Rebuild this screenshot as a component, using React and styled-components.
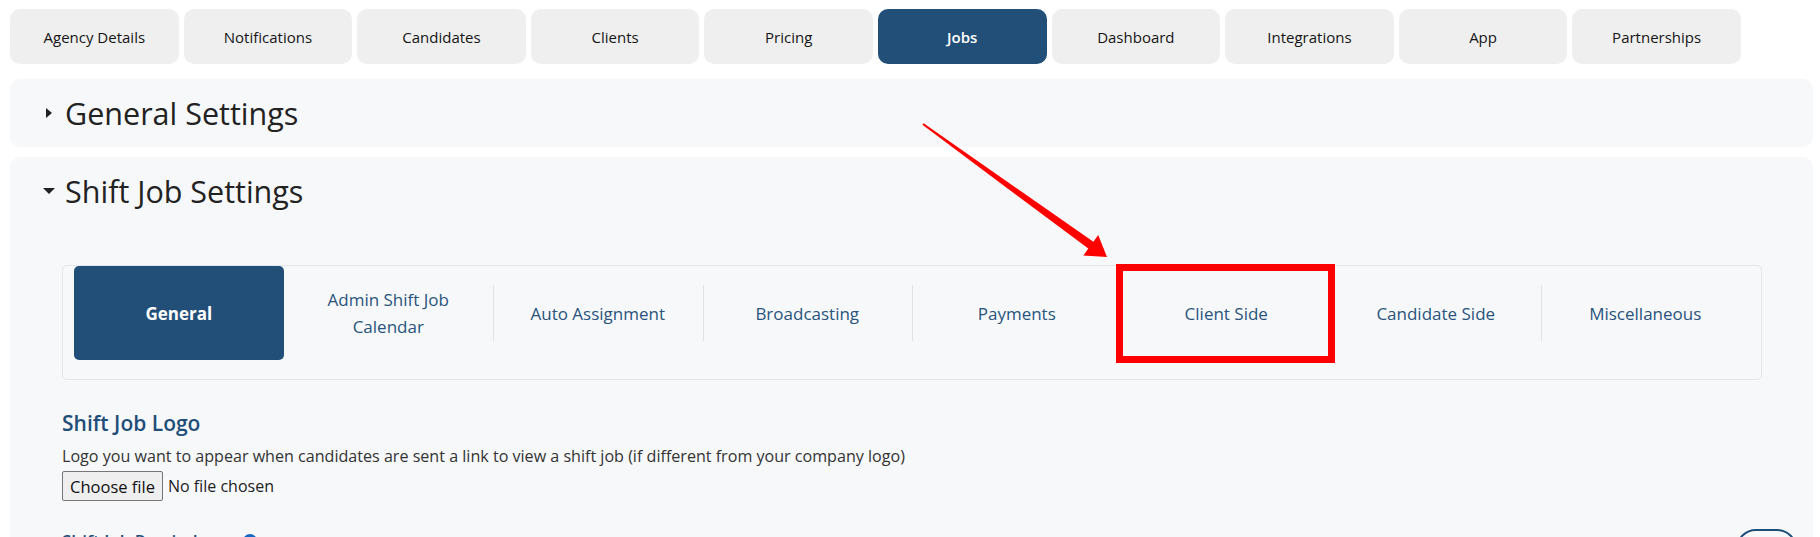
import React from "react";
import styled, { createGlobalStyle } from "styled-components";

const GlobalStyle = createGlobalStyle`
  html, body { margin: 0; padding: 0; background: #ffffff; }
  body { font-family: "Open Sans", "Noto Sans", sans-serif; color: #222; }
  * { box-sizing: border-box; }
`;

const Page = styled.div`
  position: relative;
  height: 537px;
  overflow: hidden;
  padding: 9px 7px 0 10px;
`;

const TopNav = styled.nav`
  display: flex;
  gap: 5px;
`;

const NavTab = styled.div`
  flex: 0 0 168.6px;
  height: 55px;
  border-radius: 10px;
  background: ${(p) => (p.$active ? "#214f78" : "#efefef")};
  color: ${(p) => (p.$active ? "#ffffff" : "#151515")};
  font-size: 15px;
  font-weight: ${(p) => (p.$active ? 600 : 500)};
  display: flex;
  align-items: center;
  justify-content: center;
`;

const Panel = styled.section`
  background: #f7f8fa;
  border-radius: 10px;
  margin-top: ${(p) => p.$mt}px;
`;

const PanelHeader = styled.div`
  height: 68px;
  display: flex;
  align-items: center;
  gap: 9px;
  padding-left: 32px;
`;

const Caret = styled.span`
  width: 14px;
  height: 14px;
  display: flex;
  align-items: center;
  justify-content: center;
  &::before {
    content: "";
    width: 0;
    height: 0;
    ${(p) =>
      p.$open
        ? `border-top: 6px solid #222; border-left: 6px solid transparent; border-right: 6px solid transparent;`
        : `border-left: 6px solid #222; border-top: 5px solid transparent; border-bottom: 5px solid transparent;`}
  }
`;

const PanelTitle = styled.h2`
  margin: 0;
  font-size: 30.5px;
  font-weight: 400;
  color: #222;
`;

const PanelBody = styled.div`
  padding: 0 51px 40px 52px;
`;

const SubTabs = styled.div`
  margin-top: 40px;
  display: grid;
  grid-template-columns: repeat(8, 1fr);
  border: 1px solid #e2e5e9;
  border-radius: 5px;
  padding: 0 11px 19px 11px;
`;

const SubTab = styled.div`
  position: relative;
  height: 94px;
  display: flex;
  align-items: center;
  justify-content: center;
  text-align: center;
  padding: 0 30px;
  line-height: 27px;
  font-size: 17px;
  font-weight: ${(p) => (p.$active ? 700 : 400)};
  color: ${(p) => (p.$active ? "#ffffff" : "#28547d")};
  background: ${(p) => (p.$active ? "#214f78" : "transparent")};
  border-radius: 5px;

  ${(p) =>
    p.$divider &&
    `&::before {
      content: "";
      position: absolute;
      left: 0;
      top: 19px;
      height: 56px;
      width: 1px;
      background: #dfe2e6;
    }`}

  ${(p) =>
    p.$highlight &&
    `&::after {
      content: "";
      position: absolute;
      z-index: 2;
      top: -2px;
      left: -5.5px;
      right: -4px;
      bottom: -3px;
      border: 7px solid #ff0000;
    }`}
`;

const Section = styled.div`
  margin-top: 29px;
`;

const SectionTitle = styled.h3`
  margin: 0;
  font-size: 21px;
  font-weight: 600;
  color: #1f4e79;
  line-height: 28px;
`;

const Help = styled.p`
  margin: 7px 0 0;
  font-size: 16.1px;
  color: #333;
  line-height: 24px;
`;

const FileRow = styled.div`
  display: flex;
  align-items: center;
  gap: 5px;
  margin-top: 3px;
`;

const FileButton = styled.button`
  width: 101px;
  height: 30px;
  padding: 0;
  border: 1px solid #767676;
  border-radius: 2px;
  background: #efefef;
  font-family: inherit;
  font-size: 16.5px;
  color: #111;
`;

const FileName = styled.span`
  font-size: 16px;
  color: #222;
`;

const FieldRow = styled.div`
  margin-top: 28px;
  display: flex;
  align-items: center;
  gap: 20px;
`;

const FieldLabel = styled.span`
  font-size: 17px;
  font-weight: 600;
  color: #1f4e79;
`;

const InfoDot = styled.span`
  width: 14px;
  height: 14px;
  border-radius: 50%;
  background: #1767c7;
`;

const FloatButton = styled.div`
  position: absolute;
  right: 23px;
  top: 529px;
  width: 61px;
  height: 40px;
  border-radius: 20px;
  border: 2px solid #1f4e79;
  background: #f7f8fa;
`;

const ArrowSvg = styled.svg`
  position: absolute;
  left: 900px;
  top: 110px;
  pointer-events: none;
`;

const navItems = [
  "Agency Details",
  "Notifications",
  "Candidates",
  "Clients",
  "Pricing",
  "Jobs",
  "Dashboard",
  "Integrations",
  "App",
  "Partnerships",
];

const subItems = [
  "General",
  "Admin Shift Job Calendar",
  "Auto Assignment",
  "Broadcasting",
  "Payments",
  "Client Side",
  "Candidate Side",
  "Miscellaneous",
];

export default function App() {
  return (
    <>
      <GlobalStyle />
      <Page>
        <TopNav>
          {navItems.map((n) => (
            <NavTab key={n} $active={n === "Jobs"}>
              {n}
            </NavTab>
          ))}
        </TopNav>

        <Panel $mt={15}>
          <PanelHeader>
            <Caret />
            <PanelTitle>General Settings</PanelTitle>
          </PanelHeader>
        </Panel>

        <Panel $mt={10}>
          <PanelHeader>
            <Caret $open />
            <PanelTitle>Shift Job Settings</PanelTitle>
          </PanelHeader>
          <PanelBody>
            <SubTabs>
              {subItems.map((s, i) => (
                <SubTab
                  key={s}
                  $active={i === 0}
                  $divider={i >= 2}
                  $highlight={s === "Client Side"}
                >
                  {s}
                </SubTab>
              ))}
            </SubTabs>

            <Section>
              <SectionTitle>Shift Job Logo</SectionTitle>
              <Help>
                Logo you want to appear when candidates are sent a link to view a
                shift job (if different from your company logo)
              </Help>
              <FileRow>
                <FileButton type="button">Choose file</FileButton>
                <FileName>No file chosen</FileName>
              </FileRow>
            </Section>

            <FieldRow>
              <FieldLabel>Shift Job Reminders</FieldLabel>
              <InfoDot />
            </FieldRow>
          </PanelBody>
        </Panel>

        <FloatButton />

        <ArrowSvg width="220" height="160" viewBox="0 0 220 160">
          <polygon
            fill="#ff0000"
            points="23.6,13.2 193.4,131.8 198.2,125 207,147 183.4,145.6 188.3,138.6 22.4,14.8"
          />
        </ArrowSvg>
      </Page>
    </>
  );
}
